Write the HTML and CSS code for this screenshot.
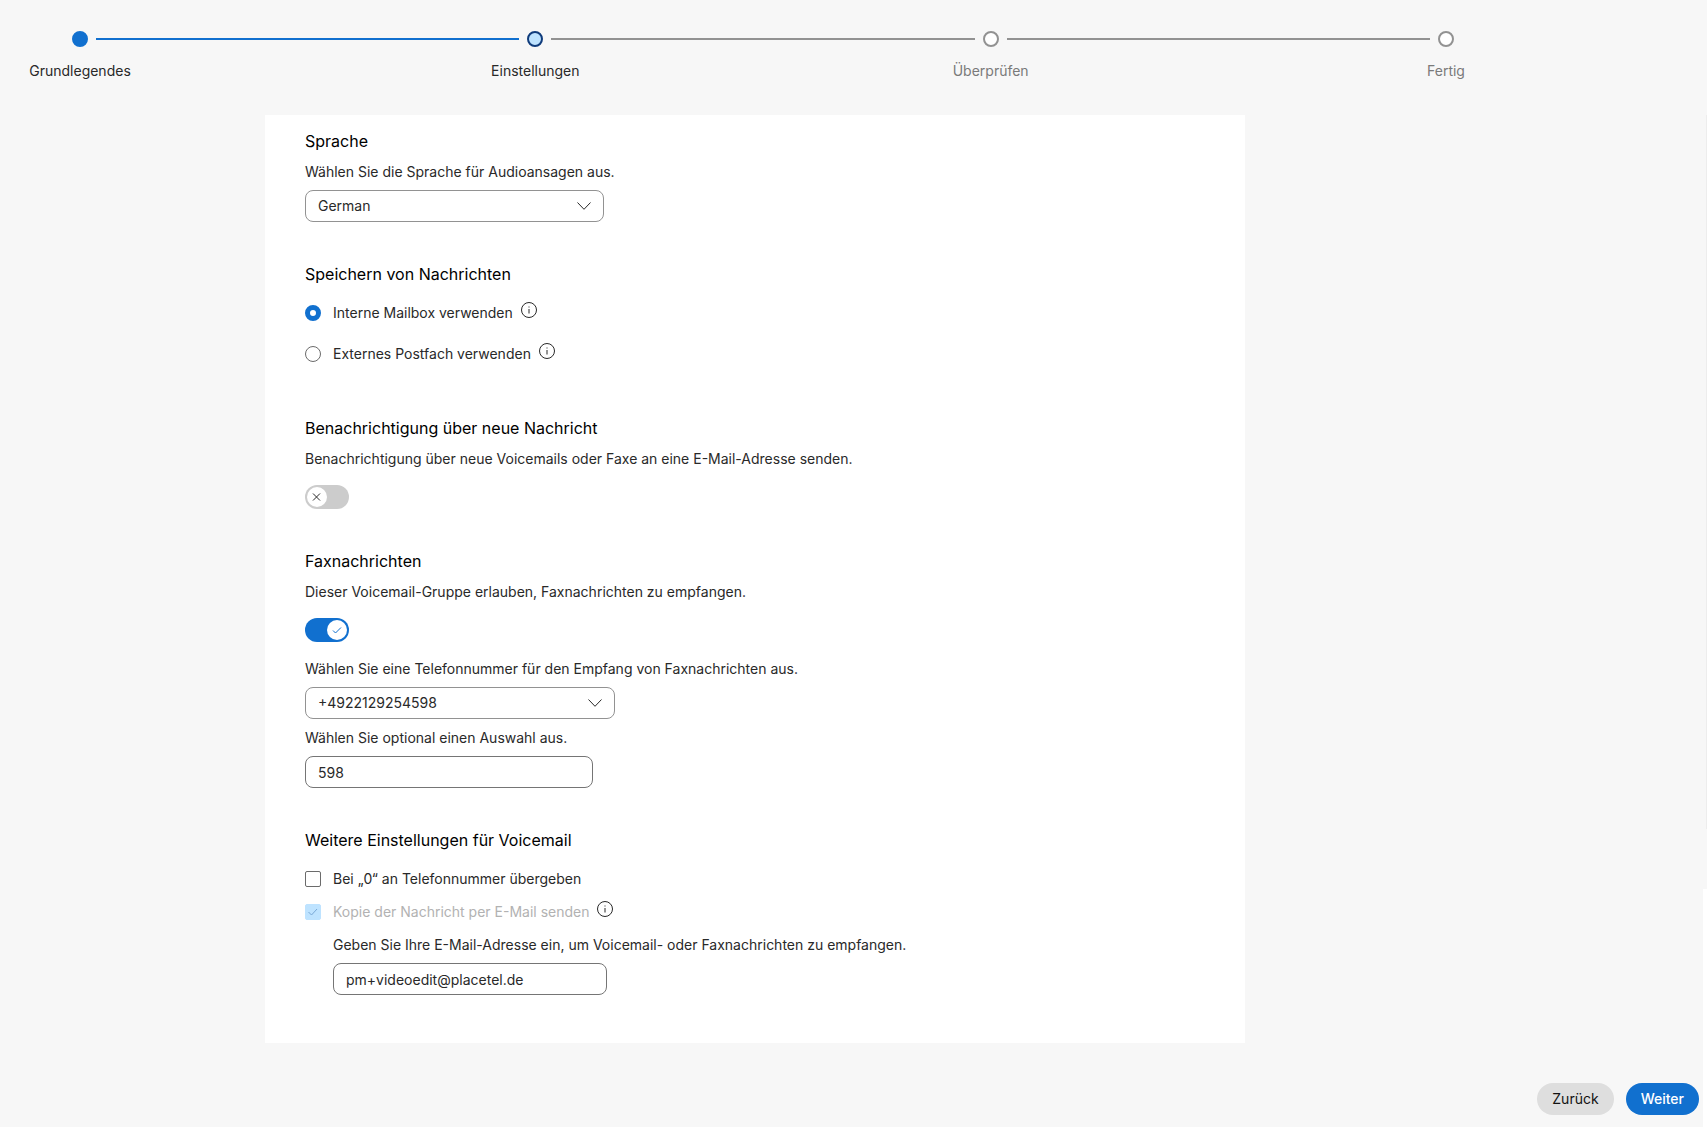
FILE: index.html
```html
<!DOCTYPE html>
<html lang="de">
<head>
	<meta charset="UTF-8">
	<meta name="viewport" content="width=device-width, initial-scale=1">
	<title>Voicemail-Gruppe</title>

	<link rel="stylesheet" href="styles.css">
</head>
<body>
	<div class="page">
		<ol class="stepper">
			<li class="step done">
				<span class="dot"></span>
				<span class="line"></span>
				<span class="step-label">Grundlegendes</span>
			</li>
			<li class="step current" aria-current="step">
				<span class="dot"></span>
				<span class="line"></span>
				<span class="step-label">Einstellungen</span>
			</li>
			<li class="step">
				<span class="dot"></span>
				<span class="line"></span>
				<span class="step-label">Überprüfen</span>
			</li>
			<li class="step">
				<span class="dot"></span>
				<span class="step-label">Fertig</span>
			</li>
		</ol>

		<form class="wizard">
			<main class="content">
				<div class="card">
					<section class="section">
						<h2>Sprache</h2>
						<label class="text" for="language">Wählen Sie die Sprache für Audioansagen aus.</label>
						<div class="select language">
							<select id="language">
								<option>German</option>
							</select>
							<svg class="chevron" viewBox="0 0 16 16"><path d="M1.5 4.5 8 11.3l6.5-6.8"/></svg>
						</div>
					</section>

					<section class="section storage">
						<h2>Speichern von Nachrichten</h2>
						<div class="option">
							<input type="radio" id="internal" name="storage" checked>
							<label for="internal">Interne Mailbox verwenden</label>
							<svg class="info" viewBox="0 0 16 16"><circle cx="8" cy="8" r="7.5"/><path d="M8 7v4.5M8 4.5v1"/></svg>
						</div>
						<div class="option">
							<input type="radio" id="external" name="storage">
							<label for="external">Externes Postfach verwenden</label>
							<svg class="info" viewBox="0 0 16 16"><circle cx="8" cy="8" r="7.5"/><path d="M8 7v4.5M8 4.5v1"/></svg>
						</div>
					</section>

					<section class="section">
						<h2>Benachrichtigung über neue Nachricht</h2>
						<label class="text" for="notify">Benachrichtigung über neue Voicemails oder Faxe an eine E-Mail-Adresse senden.</label>
						<div class="toggle">
							<input type="checkbox" role="switch" id="notify">
							<svg viewBox="0 0 20 20"><path d="m6 6.500 7 7m0-7-7 7"/></svg>
						</div>
					</section>

					<section class="section">
						<h2>Faxnachrichten</h2>
						<label class="text" for="fax">Dieser Voicemail-Gruppe erlauben, Faxnachrichten zu empfangen.</label>
						<div class="toggle on">
							<input type="checkbox" role="switch" id="fax" checked>
							<svg viewBox="0 0 20 20"><path d="m6 10.500 2.500 2.500 5.500-5.500"/></svg>
						</div>
						<label class="text number-text" for="number">Wählen Sie eine Telefonnummer für den Empfang von Faxnachrichten aus.</label>
						<div class="select number">
							<select id="number">
								<option>+4922129254598</option>
							</select>
							<svg class="chevron" viewBox="0 0 16 16"><path d="M1.5 4.5 8 11.3l6.5-6.8"/></svg>
						</div>
						<label class="text" for="extension">Wählen Sie optional einen Auswahl aus.</label>
						<input class="input extension" type="text" id="extension" value="598">
					</section>

					<section class="section more">
						<h2>Weitere Einstellungen für Voicemail</h2>
						<div class="option">
							<input type="checkbox" id="transfer">
							<label for="transfer">Bei „0“ an Telefonnummer übergeben</label>
						</div>
						<div class="option disabled">
							<span class="check">
								<input type="checkbox" id="copy" checked disabled>
								<svg viewBox="0 0 16 16"><path d="m3.500 8 3 3L12 5"/></svg>
							</span>
							<label for="copy">Kopie der Nachricht per E-Mail senden</label>
							<svg class="info" viewBox="0 0 16 16"><circle cx="8" cy="8" r="7.5"/><path d="M8 7v4.5M8 4.5v1"/></svg>
						</div>
						<div class="indent">
							<label class="text" for="email">Geben Sie Ihre E-Mail-Adresse ein, um Voicemail- oder Faxnachrichten zu empfangen.</label>
							<input class="input email" type="email" id="email" value="pm+videoedit@placetel.de">
						</div>
					</section>
				</div>
			</main>

			<footer class="footer">
				<button class="btn" type="button">Zurück</button>
				<button class="btn primary" type="submit">Weiter</button>
			</footer>
		</form>
		<span class="scroll-edge"></span>
		<span class="page-edge"></span>
	</div>
</body>
</html>
```
FILE: styles.css
```css
* {
	box-sizing: border-box;
}
body {
	margin: 0;
	background: #fff;
	color: #292929;
	font: 14px/20px Inter, "Liberation Sans", sans-serif;
}
.page {
	position: relative;
	display: flex;
	flex-direction: column;
	min-height: calc(100vh - 6px);
	background: #f7f7f7;
}

/* stepper */
.stepper {
	display: flex;
	gap: 8px;
	margin: 0;
	padding: 31px 253px 34px 72px;
	list-style: none;
}
.step {
	display: grid;
	grid-template-columns: 16px 1fr;
	column-gap: 8px;
	row-gap: 14px;
	align-items: center;
	flex: 1;
	color: #7a7a7a;
}
.step:last-child {
	flex: none;
	grid-template-columns: 16px;
}
.dot {
	width: 16px;
	height: 16px;
	border: 2px solid #929292;
	border-radius: 50%;
	background: #fff;
}
.line {
	height: 2px;
	background: #929292;
}
.step-label {
	grid-column: 1;
	justify-self: center;
}
.done,
.current {
	color: #292929;
}
.done .dot {
	border-color: #1170cf;
	background: #1170cf;
}
.done .line {
	background: #1170cf;
}
.current .dot {
	border-color: #103c7c;
	background: #bee3ff;
}

/* form */
.wizard {
	display: flex;
	flex-direction: column;
	flex: 1;
}
.content {
	padding-right: 197px;
}
.card {
	max-width: 980px;
	margin: 0 auto;
	padding: 14px 40px 48px;
	background: #fff;
}
.section {
	margin-bottom: 40px;
}
.section.storage {
	margin-bottom: 52px;
}
.section:last-child {
	margin-bottom: 0;
}
h2 {
	margin: 0;
	color: #000;
	font-size: 16px;
	line-height: 24px;
	font-weight: 400;
}
.text {
	display: block;
	width: fit-content;
	margin: 9px 0 8px;
}
.option {
	display: flex;
	align-items: center;
	height: 20px;
	margin-top: 17px;
}
.storage .option + .option {
	margin-top: 21px;
}
.more .option + .option {
	margin-top: 13px;
}
.option input {
	appearance: none;
	flex: none;
	width: 16px;
	height: 16px;
	margin: 0;
	border: 1px solid #6b6b6b;
	border-radius: 2px;
	background: #fff;
}
.option input[type="radio"] {
	border-radius: 50%;
}
.option input[type="radio"]:checked {
	border: 5px solid #1170cf;
}
.option label {
	margin-left: 12px;
}
.option.disabled {
	color: #b2b2b2;
}
.check {
	position: relative;
	display: flex;
}
.option .check input {
	border-color: #bee3ff;
	background: #bee3ff;
}
.check svg {
	position: absolute;
	inset: 0;
	fill: none;
	stroke: #7aa9d6;
}
.info {
	width: 16px;
	height: 16px;
	margin: 0 0 6px 8px;
	fill: none;
	stroke: #292929;
}
.indent {
	padding-left: 28px;
}
.indent .text {
	margin-top: 13px;
}

.select {
	position: relative;
}
.language {
	width: 299px;
}
.number {
	width: 310px;
}
.select select,
.input {
	appearance: none;
	display: block;
	width: 100%;
	height: 32px;
	margin: 0;
	padding: 0 12px;
	border: 1px solid #929292;
	border-radius: 8px;
	background: #fff;
	color: #292929;
	font: inherit;
}
.input {
	border-color: #757575;
}
.extension {
	width: 288px;
}
.email {
	width: 274px;
}
.chevron {
	position: absolute;
	top: 8px;
	right: 12px;
	width: 16px;
	height: 16px;
	fill: none;
	stroke: #292929;
	pointer-events: none;
}

.toggle {
	position: relative;
	width: 44px;
	height: 24px;
	margin-top: 16px;
}
.toggle input {
	appearance: none;
	display: block;
	width: 44px;
	height: 24px;
	margin: 0;
	border-radius: 12px;
	background: #ccc;
}
.toggle svg {
	position: absolute;
	top: 2px;
	left: 2px;
	width: 20px;
	height: 20px;
	border-radius: 50%;
	background: #fff;
	fill: none;
	stroke: #292929;
	pointer-events: none;
}
.toggle.on input {
	background: #1170cf;
}
.toggle.on svg {
	left: 22px;
	stroke: #1170cf;
}
.number-text {
	margin-top: 17px;
}

/* footer */
.footer {
	display: flex;
	justify-content: flex-end;
	gap: 12px;
	margin-top: auto;
	padding: 12px 8px;
}
.btn {
	height: 32px;
	padding: 0 15px;
	border: 0;
	border-radius: 16px;
	background: #dedede;
	color: #121212;
	font: inherit;
}
.btn.primary {
	background: #1170cf;
	color: #fff;
	font-weight: 500;
}

/* right edge of the scroll area and of the page */
.scroll-edge,
.page-edge {
	position: absolute;
	right: 0;
}
.scroll-edge {
	top: 115px;
	bottom: 298px;
	width: 1px;
	background: #ededed;
}
.page-edge {
	bottom: 0;
	width: 4px;
	height: 238px;
	background: #fff;
}
```
